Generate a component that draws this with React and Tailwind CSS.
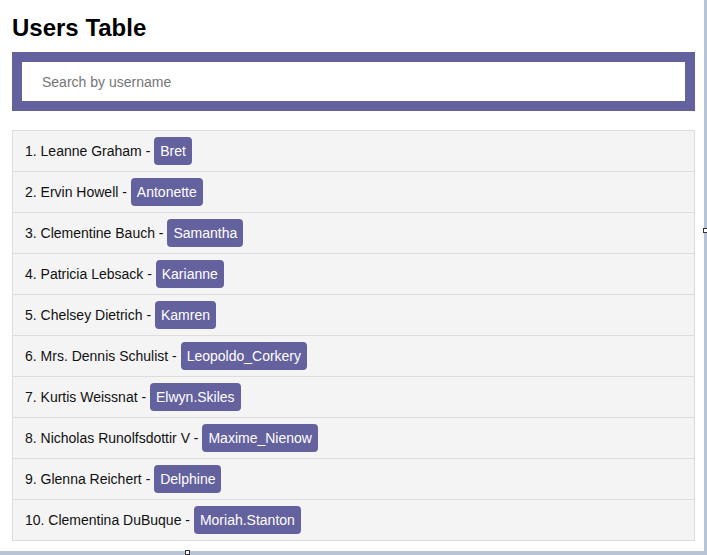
const users = [
  { id: 1, name: "Leanne Graham", username: "Bret" },
  { id: 2, name: "Ervin Howell", username: "Antonette" },
  { id: 3, name: "Clementine Bauch", username: "Samantha" },
  { id: 4, name: "Patricia Lebsack", username: "Karianne" },
  { id: 5, name: "Chelsey Dietrich", username: "Kamren" },
  { id: 6, name: "Mrs. Dennis Schulist", username: "Leopoldo_Corkery" },
  { id: 7, name: "Kurtis Weissnat", username: "Elwyn.Skiles" },
  { id: 8, name: "Nicholas Runolfsdottir V", username: "Maxime_Nienow" },
  { id: 9, name: "Glenna Reichert", username: "Delphine" },
  { id: 10, name: "Clementina DuBuque", username: "Moriah.Stanton" },
];

const App = () => {
  return (
    <div
      className="relative w-[707px] h-[555px] bg-[#b9c3d6] overflow-hidden"
      style={{ fontFamily: '"Liberation Sans", Arial, sans-serif' }}
    >
      <div className="w-[704px] h-[551px] bg-white px-3">
        <h1 className="pt-[14px] text-[24px] leading-[28px] font-bold text-black mb-[10px]">
          Users Table
        </h1>

        <div className="bg-[#64619f] p-[10px] w-[683px]">
          <input
            type="text"
            placeholder="Search by username"
            className="w-full h-[39px] bg-white pl-5 text-[14px] text-black placeholder:text-[#757575] outline-none"
          />
        </div>

        <ul className="mt-[19px] w-[683px] border border-[#dcdcdc] bg-[#f4f4f4]">
          {users.map((u, i) => (
            <li
              key={u.id}
              className={`flex items-center h-[40px] pl-3 text-[14px] text-[#111] ${
                i > 0 ? "border-t border-[#dcdcdc] h-[41px]" : ""
              }`}
            >
              <span className="whitespace-pre">
                {u.id}. {u.name} -{" "}
              </span>
              <span className="bg-[#64619f] text-white rounded-[4px] px-[6px] h-[28px] leading-[28px]">
                {u.username}
              </span>
            </li>
          ))}
        </ul>
      </div>

      {/* window resize handles */}
      <div className="absolute left-[185px] top-[550px] w-[5px] h-[5px] border border-[#333] bg-white" />
      <div className="absolute left-[703px] top-[228px] w-[5px] h-[5px] border border-[#333] bg-white" />
    </div>
  );
};

export default App;
